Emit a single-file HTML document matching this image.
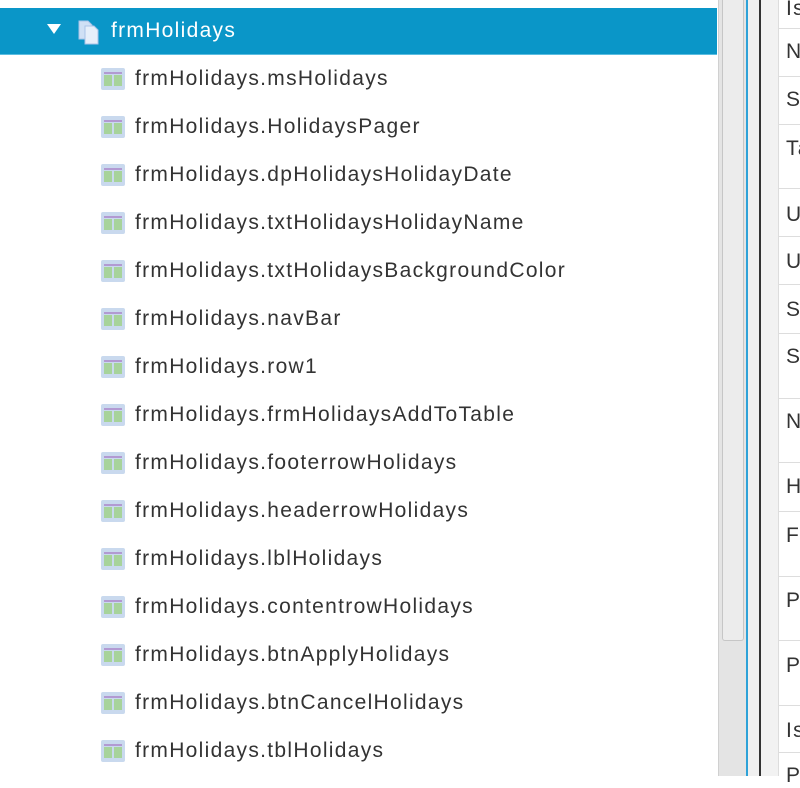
<!DOCTYPE html><html><head><style>
body{margin:0;width:800px;height:776px;overflow:hidden;background:#fff;font-family:"Liberation Sans",sans-serif;position:relative}
.a{position:absolute}
.sel{left:0;top:8px;width:717px;height:46px;background:#0a96c8;border-bottom:1px solid #5bbde0}
.row{position:absolute;left:101px;height:24px;font-size:21px;letter-spacing:1.3px;color:#333;line-height:24px}
.ic{position:absolute;left:0;top:0;width:24px;height:22px;background:#c9d9ee;border-radius:2px}
.ic i{position:absolute;left:3px;top:4px;width:18px;height:2px;background:#b29ad2}
.ic b{position:absolute;top:7px;width:8px;height:11px;background:#a7d39b}
.row span{position:absolute;left:34px;top:-1px;white-space:nowrap}
.rl{position:absolute;left:779px;width:21px;height:1px;background:#ddd}
.rt{position:absolute;left:786px;font-size:21px;letter-spacing:1.3px;color:#333;line-height:24px}
</style></head><body>
<div class="a sel"></div>
<div class="a" style="left:47px;top:24px;width:0;height:0;border-left:7px solid transparent;border-right:7px solid transparent;border-top:10px solid #fff"></div>
<svg class="a" style="left:77px;top:20px" width="26" height="26"><path d="M2 1h9l4 4v14H2z" fill="#cfe0f5" stroke="#aac3e8"/><path d="M8 6h9l4 4v14H8z" fill="#e6effa" stroke="#aac3e8"/></svg>
<div class="a" style="left:111px;top:19px;font-size:21px;letter-spacing:1.3px;color:#fff;line-height:24px">frmHolidays</div>
<div class="a" style="left:718px;top:0;width:28px;height:776px;background:#e4e4e4;border-left:1px solid #d0d0d0"></div>
<div class="a" style="left:722px;top:0;width:20px;height:640px;background:#ececec;border:1px solid #c6c6c6;border-top:none;border-radius:0 0 3px 3px"></div>
<div class="a" style="left:746px;top:0;width:2px;height:776px;background:#2ea2d8"></div>
<div class="a" style="left:748px;top:0;width:11px;height:776px;background:#f0f0f0"></div>
<div class="a" style="left:759px;top:0;width:2px;height:776px;background:#333"></div>
<div class="a" style="left:761px;top:0;width:17px;height:776px;background:#f2f2f2;border-right:1px solid #ddd"></div>
<div id="L"></div>
<script>
var n=["msHolidays","HolidaysPager","dpHolidaysHolidayDate","txtHolidaysHolidayName","txtHolidaysBackgroundColor","navBar","row1","frmHolidaysAddToTable","footerrowHolidays","headerrowHolidays","lblHolidays","contentrowHolidays","btnApplyHolidays","btnCancelHolidays","tblHolidays"],h="";
n.forEach(function(s,i){h+='<div class="row" style="top:'+(68+i*48)+'px"><div class="ic"><i></i><b style="left:3px"></b><b style="left:13px"></b></div><span>frmHolidays.'+s+'</span></div>'});
var ls=[28,76,124,188,236,284,333,398,462,511,576,640,705,752];ls.forEach(function(y){h+='<div class="rl" style="top:'+y+'px"></div>'});
var t=[["Is",-3],["N",40],["Sl",88],["Ta",137],["U",203],["U",250],["Sl",298],["Sl",345],["N",410],["H",475],["Fo",524],["Pa",589],["Pa",654],["Is",719],["P",764]];
t.forEach(function(a){h+='<div class="rt" style="top:'+a[1]+'px">'+a[0]+'</div>'});
document.getElementById("L").innerHTML=h;
</script>
</body></html>
